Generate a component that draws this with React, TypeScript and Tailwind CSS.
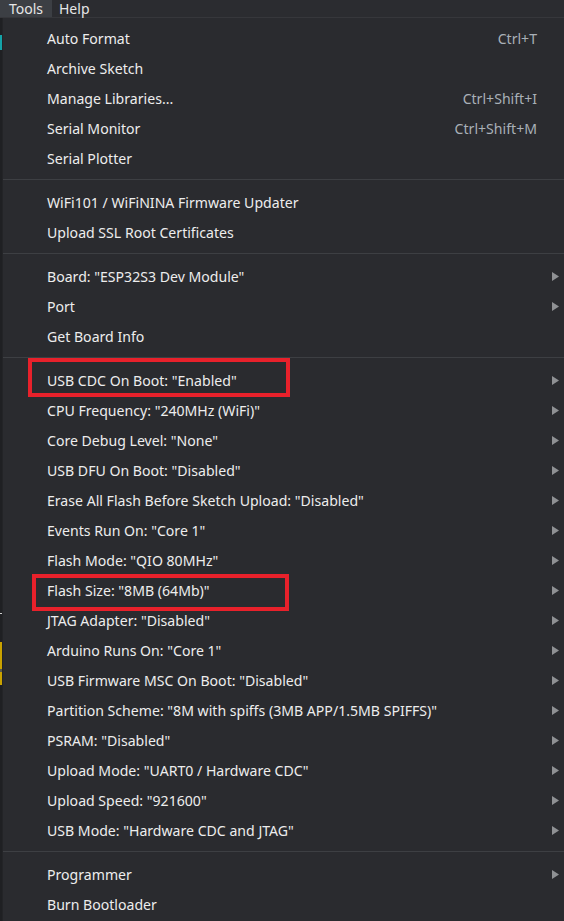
import React from "react";

type Item = { label: string; shortcut?: string; sub?: boolean } | "sep";

const items: Item[] = [
  { label: "Auto Format", shortcut: "Ctrl+T" },
  { label: "Archive Sketch" },
  { label: "Manage Libraries...", shortcut: "Ctrl+Shift+I" },
  { label: "Serial Monitor", shortcut: "Ctrl+Shift+M" },
  { label: "Serial Plotter" },
  "sep",
  { label: "WiFi101 / WiFiNINA Firmware Updater" },
  { label: "Upload SSL Root Certificates" },
  "sep",
  { label: 'Board: "ESP32S3 Dev Module"', sub: true },
  { label: "Port", sub: true },
  { label: "Get Board Info" },
  "sep",
  { label: 'USB CDC On Boot: "Enabled"', sub: true },
  { label: 'CPU Frequency: "240MHz (WiFi)"', sub: true },
  { label: 'Core Debug Level: "None"', sub: true },
  { label: 'USB DFU On Boot: "Disabled"', sub: true },
  { label: 'Erase All Flash Before Sketch Upload: "Disabled"', sub: true },
  { label: 'Events Run On: "Core 1"', sub: true },
  { label: 'Flash Mode: "QIO 80MHz"', sub: true },
  { label: 'Flash Size: "8MB (64Mb)"', sub: true },
  { label: 'JTAG Adapter: "Disabled"', sub: true },
  { label: 'Arduino Runs On: "Core 1"', sub: true },
  { label: 'USB Firmware MSC On Boot: "Disabled"', sub: true },
  { label: 'Partition Scheme: "8M with spiffs (3MB APP/1.5MB SPIFFS)"', sub: true },
  { label: 'PSRAM: "Disabled"', sub: true },
  { label: 'Upload Mode: "UART0 / Hardware CDC"', sub: true },
  { label: 'Upload Speed: "921600"', sub: true },
  { label: 'USB Mode: "Hardware CDC and JTAG"', sub: true },
  "sep",
  { label: "Programmer", sub: true },
  { label: "Burn Bootloader" },
];

function Arrow() {
  return (
    <svg width="7" height="9" viewBox="0 0 7 9" className="block">
      <path d="M0 0 L7 4.5 L0 9 Z" fill="#8f9194" />
    </svg>
  );
}

export default function App() {
  return (
    <div
      className="w-[564px] h-[921px] overflow-hidden bg-[#2a2b2f] text-[#ededed] flex flex-col"
      style={{ fontFamily: '"Noto Sans", "Open Sans", sans-serif' }}
    >
      {/* menu bar */}
      <div className="h-[18px] shrink-0 flex items-stretch bg-[#2b2c30] border-b border-[#36373b] text-[14px] leading-[17px]">
        <div className="w-[52px] bg-[#3c3f44] pl-[9px] text-[#e6e6e6]">Tools</div>
        <div className="pl-[7px] text-[#e6e6e6]">Help</div>
      </div>

      <div className="flex flex-1 min-h-0">
        {/* editor strip behind */}
        <div className="w-[2px] shrink-0 bg-[#1f2023] flex flex-col">
          <div className="h-[17px]" />
          <div className="h-[15px] bg-[#14a3a8]" />
          <div className="h-[563px]" />
          <div className="h-[1px] bg-[#cfcfcf]" />
          <div className="h-[28px]" />
          <div className="h-[27px] bg-[#c9a200]" />
          <div className="h-[3px] bg-[#5a5a4a]" />
          <div className="h-[13px] bg-[#c9a200]" />
        </div>
        <div className="w-[1px] shrink-0 bg-[#232427]" />

        {/* menu */}
        <div className="relative flex-1 pt-[5px] text-[14.1px]">
          {items.map((it, i) =>
            it === "sep" ? (
              <div key={i} className="h-[14px] pt-[6px]">
                <div className="h-[1px] bg-[#3d3f43]" />
              </div>
            ) : (
              <div key={i} className="h-[30px] flex items-center pl-[44px] pr-[5px] pt-[1px]">
                <span className="flex-1 whitespace-nowrap">{it.label}</span>
                {it.shortcut && (
                  <span className="text-[#a9b0b7] mr-[22px] whitespace-nowrap">{it.shortcut}</span>
                )}
                {it.sub && <Arrow />}
              </div>
            )
          )}

          {/* annotation boxes */}
          <div className="absolute left-[25px] top-[340px] w-[262px] h-[39px] border-[4px] border-[#e8212b]" />
          <div className="absolute left-[29px] top-[556px] w-[257px] h-[37px] border-[4px] border-[#e8212b]" />
        </div>
      </div>
    </div>
  );
}
